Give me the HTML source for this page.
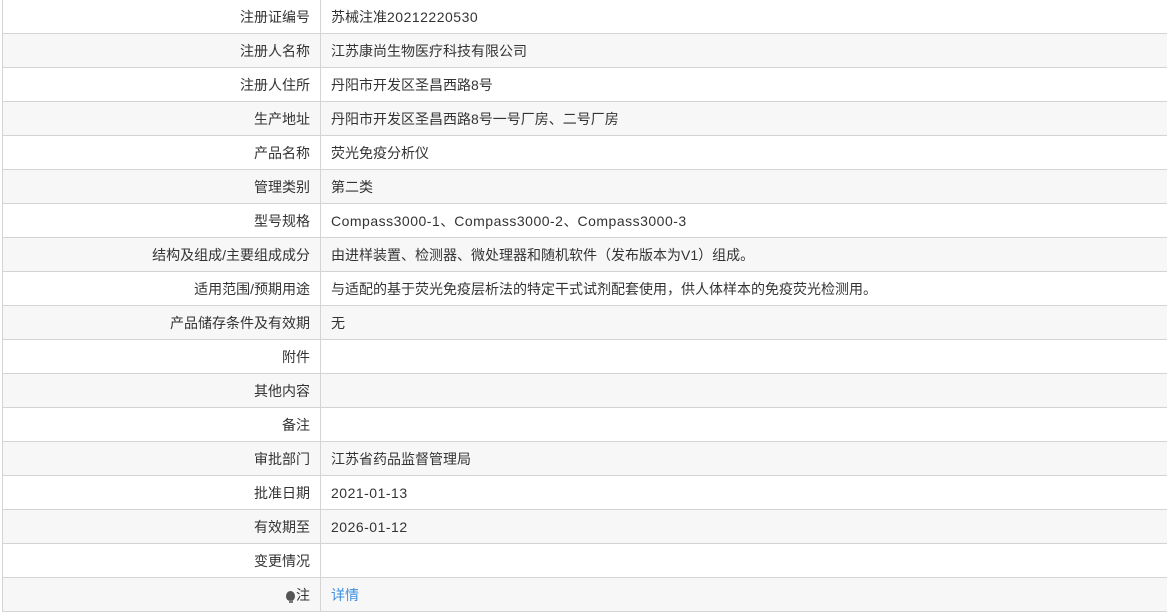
<!DOCTYPE html>
<html><head><meta charset="utf-8"><style>
html,body{margin:0;padding:0;background:#fff;}
body{width:1168px;height:614px;overflow:hidden;font-family:"Liberation Sans","Noto Sans CJK SC",sans-serif;font-size:14px;color:#333;}
table{position:absolute;left:2px;top:-1px;width:1165px;border-collapse:collapse;}
td{height:33px;border:1px solid #d4d4d4;border-right:none;padding:2px 10px 0 10px;line-height:31px;white-space:nowrap;box-sizing:border-box;}
td.l{width:318px;text-align:right;}
tr:nth-child(even) td{background:#f7f7f7;}
a{color:#3d8fe0;text-decoration:none;}
.e{letter-spacing:0.5px;}
.b{display:inline-block;width:9px;height:10px;background:#555;border-radius:50% 50% 45% 45%;vertical-align:-1px;margin-right:1px;position:relative;}
.b:after{content:"";position:absolute;left:3px;top:9px;width:4px;height:3px;background:#777;}
</style></head><body>
<table>
<tr><td class="l">注册证编号</td><td>苏械注准<span class="e">20212220530</span></td></tr>
<tr><td class="l">注册人名称</td><td>江苏康尚生物医疗科技有限公司</td></tr>
<tr><td class="l">注册人住所</td><td>丹阳市开发区圣昌西路8号</td></tr>
<tr><td class="l">生产地址</td><td>丹阳市开发区圣昌西路8号一号厂房、二号厂房</td></tr>
<tr><td class="l">产品名称</td><td>荧光免疫分析仪</td></tr>
<tr><td class="l">管理类别</td><td>第二类</td></tr>
<tr><td class="l">型号规格</td><td><span class="e">Compass3000-1</span>、<span class="e">Compass3000-2</span>、<span class="e">Compass3000-3</span></td></tr>
<tr><td class="l">结构及组成/主要组成成分</td><td>由进样装置、检测器、微处理器和随机软件（发布版本为V1）组成。</td></tr>
<tr><td class="l">适用范围/预期用途</td><td>与适配的基于荧光免疫层析法的特定干式试剂配套使用，供人体样本的免疫荧光检测用。</td></tr>
<tr><td class="l">产品储存条件及有效期</td><td>无</td></tr>
<tr><td class="l">附件</td><td></td></tr>
<tr><td class="l">其他内容</td><td></td></tr>
<tr><td class="l">备注</td><td></td></tr>
<tr><td class="l">审批部门</td><td>江苏省药品监督管理局</td></tr>
<tr><td class="l">批准日期</td><td><span class="e">2021-01-13</span></td></tr>
<tr><td class="l">有效期至</td><td><span class="e">2026-01-12</span></td></tr>
<tr><td class="l">变更情况</td><td></td></tr>
<tr><td class="l"><span class="b"></span>注</td><td><a>详情</a></td></tr>
</table>
</body></html>
